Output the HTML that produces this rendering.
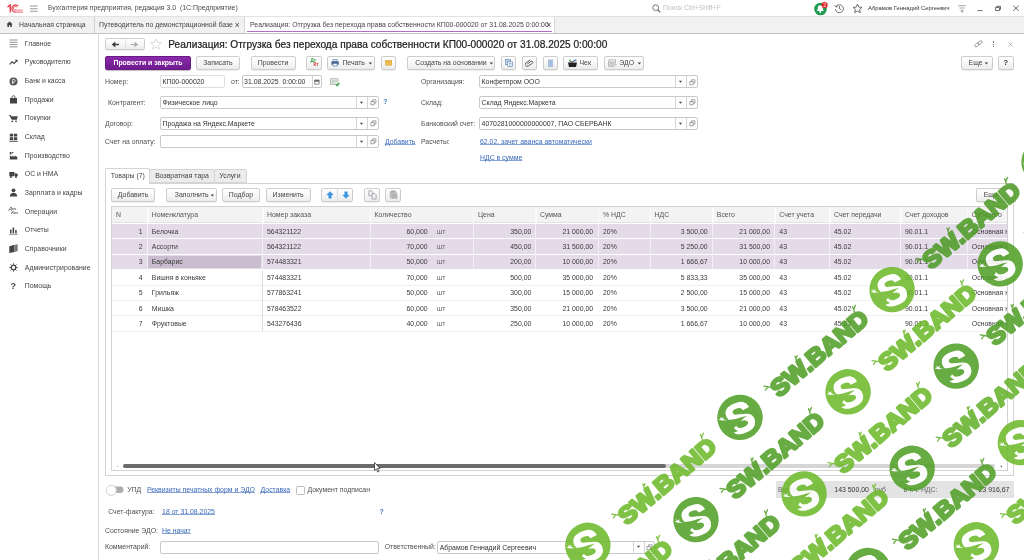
<!DOCTYPE html>
<html lang="ru">
<head>
<meta charset="utf-8">
<title>Реализация: Отгрузка без перехода права собственности</title>
<style>
*{box-sizing:border-box;margin:0;padding:0}
html,body{width:1024px;height:560px;overflow:hidden;background:#fff}
body{position:relative;font-family:"Liberation Sans",sans-serif;font-size:6.9px;color:#3c3c3c;line-height:1}
.a{position:absolute;white-space:nowrap}
.t{position:absolute;white-space:nowrap;height:10px;line-height:10px}
/* top bars */
#titlebar{left:0;top:0;width:1024px;height:16px;background:#fff}
#tabbar{left:0;top:16px;width:1024px;height:17.5px;background:#f1f1f1;border-top:1px solid #e2e2e2;border-bottom:1px solid #c4c4c4}
#acttab{left:244px;top:17px;width:310.5px;height:16px;background:#fff;border-left:1px solid #d6d6d6;border-right:1px solid #d6d6d6}
#actline{left:246.500px;top:30.600px;width:305.500px;height:1.400px;background:#b06fca}
/* sidebar */
#side{left:0;top:34px;width:99px;height:526px;background:#fff;border-right:1px solid #dcdcdc}
.sb{position:absolute;left:24.8px;height:10px;line-height:10px;color:#444;white-space:nowrap}
.ic{position:absolute;left:8.5px;width:9px;height:9px}
/* buttons */
.btn{position:absolute;height:13.5px;border:1px solid #cdcdcd;border-radius:2px;background:linear-gradient(#ffffff,#f6f6f6 55%,#ececec);box-shadow:0 0.5px 0.6px rgba(0,0,0,.13);text-align:center;line-height:11.5px;color:#444;white-space:nowrap}
.pbtn{position:absolute;height:13.5px;border:1px solid #6a1789;border-radius:2px;background:linear-gradient(#8a2aa9,#6f1b8f);box-shadow:0 0.6px 0.8px rgba(0,0,0,.25);text-align:center;line-height:11.5px;color:#fff;font-weight:bold;white-space:nowrap}
.inp{position:absolute;height:13px;border:1px solid #c9c9c9;border-radius:2px;background:#fff;line-height:11px;padding-left:1.3px;color:#333;white-space:nowrap;overflow:hidden}
.sep{position:absolute;top:0;width:1px;height:100%;background:#d4d4d4}
.lbl{position:absolute;height:10px;line-height:10px;color:#4f4f4f;white-space:nowrap}
.lnk{position:absolute;height:10px;line-height:10px;color:#3a6abb;text-decoration:underline;text-decoration-thickness:0.550px;text-underline-offset:0.100px;text-decoration-color:#86a4d6;text-decoration-skip-ink:none;white-space:nowrap}
.dd{position:absolute;width:0;height:0;border-left:1.800px solid transparent;border-right:1.800px solid transparent;border-top:2.200px solid #4a4a4a}
/* table */
.hc{position:absolute;top:207px;height:16px;line-height:16px;color:#555;white-space:nowrap}
.c{position:absolute;height:15.45px;line-height:15.45px;color:#3a3a3a;white-space:nowrap}
.r{text-align:right}
.vl{position:absolute;width:1px;background:#e3e3e3}
</style>
</head>
<body>
<div id="root" style="position:absolute;left:0;top:0;width:1024px;height:560px;will-change:transform;overflow:hidden">
<div class="a" id="titlebar"></div>
<div class="a" id="tabbar"></div>
<div class="a" id="acttab"></div>
<div class="a" id="actline"></div>
<svg class="a" style="left:6.5px;top:3.5px" width="17" height="9" viewBox="0 0 17 9"><g fill="none" stroke="#e3424a"><path d="M0.500 3.300L3.300 0.900V8.400" stroke-width="1.400"/><path d="M11.300 2.200A3.600 3.600 0 1 0 8.600 8.100" stroke-width="1.250"/><path d="M8.400 8.100H15.900" stroke-width="0.850"/><path d="M10.100 3.500A1.900 1.900 0 1 0 8.600 6.100" stroke-width="0.900"/><path d="M8.400 6.100H15.900" stroke-width="0.700"/></g></svg>
<svg class="a" style="left:30px;top:4.5px" width="8" height="7" viewBox="0 0 8 7"><path d="M0 1H7.600M0 3.800H7.600M0 6.300H7.600" stroke="#6a6a6a" stroke-width="0.700"/></svg>
<div class="t" style="top:3.30px;left:48.00px;color:#4a4a4a">Бухгалтерия предприятия, редакция 3.0&nbsp; (1С:Предприятие)</div>
<svg class="a" style="left:651.5px;top:3.5px" width="9" height="9" viewBox="0 0 9 9"><circle cx="3.7" cy="3.7" r="2.9" fill="none" stroke="#555" stroke-width="0.8"/><path d="M5.8 5.9L8.2 8.3" stroke="#555" stroke-width="1.1"/></svg>
<div class="t" style="top:3.20px;left:663.00px;color:#c2c2c2">Поиск Ctrl+Shift+F</div>
<svg class="a" style="left:813px;top:0.5px" width="16" height="15" viewBox="0 0 16 15"><circle cx="7.5" cy="8" r="6.3" fill="#1e9a52"/><path d="M7.3 4.2c-1.9 0-2.6 1.5-2.6 3.2 0 1.5-.8 2.1-1.2 2.6h7.6c-.4-.5-1.2-1.100-1.200-2.600 0-1.700-.700-3.200-2.600-3.200z" fill="#fff"/><circle cx="7.300" cy="10.900" r="1" fill="#fff"/><circle cx="11.600" cy="4" r="3.100" fill="#e0242b"/><text x="11.600" y="5.900" font-family="Liberation Sans,sans-serif" font-size="5.200" fill="#fff" text-anchor="middle">2</text></svg>
<svg class="a" style="left:833.5px;top:3px" width="11" height="11" viewBox="0 0 11 11"><path d="M2.3 3.2A4 4 0 1 1 1.4 6.2" fill="none" stroke="#4a4a4a" stroke-width="0.8"/><path d="M0.6 2.2L2.2 4.2L4 2.800" fill="none" stroke="#4a4a4a" stroke-width="0.8"/><path d="M5.400 3V5.600L7 6.700" fill="none" stroke="#4a4a4a" stroke-width="0.8"/></svg>
<svg class="a" style="left:851.5px;top:3px" width="11" height="11" viewBox="0 0 11 11"><path d="M5.500 1.100L6.800 4.100L10 4.400L7.600 6.500L8.300 9.700L5.500 8L2.700 9.700L3.400 6.500L1 4.400L4.200 4.100Z" fill="none" stroke="#4a4a4a" stroke-width="0.800" stroke-linejoin="round"/></svg>
<div class="t" style="top:3.20px;left:868.00px;font-size:5.85px;color:#333">Абрамов Геннадий Сергеевич</div>
<svg class="a" style="left:957.5px;top:4.5px" width="9" height="8" viewBox="0 0 9 8"><path d="M0.300 0.700H7.800M1.400 3H6.700M2.500 5.300H5.600" stroke="#666" stroke-width="0.600"/><path d="M3 6.500H5.100L4.050 7.700Z" fill="#444"/></svg>
<svg class="a" style="left:977px;top:4px" width="46" height="9" viewBox="0 0 46 9"><path d="M0.500 6.600H5.500" stroke="#444" stroke-width="0.800"/><path d="M18.600 3.400H22.400V6.600H18.600ZM19.800 3.400V2.300H23.500V5.400H22.400" fill="none" stroke="#444" stroke-width="0.800"/><path d="M36.200 1.700L41.800 6.800M41.800 1.700L36.200 6.800" stroke="#444" stroke-width="0.800"/></svg>
<svg class="a" style="left:5.6px;top:20.6px" width="7.2" height="6.6" viewBox="0 0 8 8"><path d="M0.200 4L4 0.500L7.800 4H6.700V7.500H4.800V5.200H3.200V7.500H1.300V4Z" fill="#444"/></svg>
<div class="t" style="top:19.70px;left:19.00px;color:#444">Начальная страница</div>
<div class="a" style="left:93.5px;top:17px;width:1px;height:16px;background:#d0d0d0"></div>
<div class="t" style="top:19.70px;left:99.00px;color:#444">Путеводитель по демонстрационной базе</div>
<div class="t" style="top:19.50px;left:234.80px;font-size:8.500px;color:#444">×</div>
<div class="t" style="top:19.70px;left:250.00px;color:#444">Реализация: Отгрузка без перехода права собственности КП00-000020 от 31.08.2025 0:00:00</div>
<div class="t" style="top:19.50px;left:546.30px;font-size:8.500px;color:#444">×</div>
<div class="a" id="side"></div>
<div class="sb" style="top:38.70px">Главное</div>
<svg class="ic" style="top:39.20px" viewBox="0 0 9 9"><path d="M0.500 1H8.500M0.500 3.300H8.500M0.500 5.600H8.500M0.500 7.900H8.500" stroke="#666" stroke-width="0.700"/></svg>
<div class="sb" style="top:57.36px">Руководителю</div>
<svg class="ic" style="top:57.86px" viewBox="0 0 9 9"><path d="M0.500 6.500L3 3.800L5 5.500L8 2.300" fill="none" stroke="#444" stroke-width="1.100"/><path d="M5.800 1.800H8.500V4.500Z" fill="#444"/></svg>
<div class="sb" style="top:76.02px">Банк и касса</div>
<svg class="ic" style="top:76.52px" viewBox="0 0 9 9"><circle cx="4.500" cy="4.500" r="4" fill="#555"/><path d="M3.600 6.800V2.500H5a1.200 1.200 0 0 1 0 2.500H2.900M2.900 5.900H5" fill="none" stroke="#fff" stroke-width="0.700"/></svg>
<div class="sb" style="top:94.68px">Продажи</div>
<svg class="ic" style="top:95.18px" viewBox="0 0 9 9"><path d="M1 3H8V8.500H1Z" fill="#444"/><path d="M3 3.500V2.200a1.500 1.500 0 0 1 3 0V3.500" fill="none" stroke="#444" stroke-width="0.800"/></svg>
<div class="sb" style="top:113.34px">Покупки</div>
<svg class="ic" style="top:113.84px" viewBox="0 0 9 9"><path d="M0 1H1.600L2.200 2.200H8.800L7.800 5.800H2.800Z" fill="#444"/><circle cx="3.300" cy="7.300" r="0.900" fill="#444"/><circle cx="7" cy="7.300" r="0.900" fill="#444"/></svg>
<div class="sb" style="top:132.00px">Склад</div>
<svg class="ic" style="top:132.50px" viewBox="0 0 9 9"><path d="M0.800 0.800H4.100V3.600H0.800ZM4.900 0.800H8.200V3.600H4.900ZM0.800 4.300H4.100V7.100H0.800ZM4.900 4.300H8.200V7.100H4.900ZM0.300 7.800H8.700V8.700H0.300Z" fill="#444"/></svg>
<div class="sb" style="top:150.66px">Производство</div>
<svg class="ic" style="top:151.16px" viewBox="0 0 9 9"><path d="M0.800 8.500V4.500L3.200 6V4.500L5.600 6V4.500L8.300 6V8.500ZM0.800 3.800V1H2.400V3.300Z" fill="#444"/><circle cx="3.600" cy="1.600" r="0.800" fill="#444"/></svg>
<div class="sb" style="top:169.32px">ОС и НМА</div>
<svg class="ic" style="top:169.82px" viewBox="0 0 9 9"><path d="M0.300 2H5.500V6.300H0.300ZM5.900 3.200H7.600L8.800 4.700V6.300H5.900Z" fill="#444"/><circle cx="2" cy="6.900" r="1" fill="#444"/><circle cx="7" cy="6.900" r="1" fill="#444"/></svg>
<div class="sb" style="top:187.98px">Зарплата и кадры</div>
<svg class="ic" style="top:188.48px" viewBox="0 0 9 9"><circle cx="4.500" cy="2.300" r="1.900" fill="#444"/><path d="M0.800 8.500C0.800 6 2.500 4.800 4.500 4.800S8.200 6 8.200 8.500Z" fill="#444"/></svg>
<div class="sb" style="top:206.64px">Операции</div>
<div class="a" style="left:8.800px;top:207.04px;font-size:4.400px;font-weight:bold;font-style:italic;color:#5a5a5a;line-height:4.400px">Дт<br>&nbsp;&nbsp;Кт</div>
<div class="sb" style="top:225.30px">Отчеты</div>
<svg class="ic" style="top:225.80px" viewBox="0 0 9 9"><path d="M1 3.500H2.500V7.500H1ZM3.600 1.500H5.100V7.500H3.600ZM6.200 4H7.700V7.500H6.200ZM0.300 7.900H8.700V8.600H0.300Z" fill="#444"/></svg>
<div class="sb" style="top:243.96px">Справочники</div>
<svg class="ic" style="top:244.46px" viewBox="0 0 9 9"><path d="M0.300 2.200L5.600 0.800V8L0.300 9Z" fill="#444"/><path d="M6 0.800L8.700 0.200V7L6 8Z" fill="#7a7a7a"/></svg>
<div class="sb" style="top:262.62px">Администрирование</div>
<svg class="ic" style="top:263.12px" viewBox="0 0 9 9"><circle cx="4.500" cy="4.500" r="2.300" fill="none" stroke="#444" stroke-width="1.300"/><path d="M4.500 0.300V8.700M0.300 4.500H8.700M1.500 1.500L7.500 7.500M7.500 1.500L1.500 7.500" stroke="#444" stroke-width="1" stroke-dasharray="1.400 5.600"/></svg>
<div class="sb" style="top:281.28px">Помощь</div>
<div class="a" style="left:10.500px;top:281.28px;font-size:9px;line-height:10px;color:#444;font-weight:bold">?</div>
<div class="btn" style="left:105px;top:38.300px;width:39.500px;height:12.200px"></div>
<div class="a" style="left:124.500px;top:39.300px;width:1px;height:10.200px;background:#e4e4e4"></div>
<svg class="a" style="left:110px;top:40px" width="30" height="9" viewBox="0 0 30 9"><path d="M1.700 4.500L5.300 1.500V3.800H8.900V5.200H5.300V7.500Z" fill="#3f3f3f"/><path d="M28.100 4.500L24.600 1.700V4H20.800V5H24.600V7.300Z" fill="#a8a8a8"/></svg>
<svg class="a" style="left:150.400px;top:38.100px" width="12" height="12" viewBox="0 0 12 12"><path d="M6 0.800L7.500 4.400L11.300 4.700L8.400 7.200L9.300 11L6 9L2.700 11L3.600 7.200L0.700 4.700L4.500 4.400Z" fill="none" stroke="#cfcfcf" stroke-width="0.700" stroke-linejoin="round"/></svg>
<div class="a" style="left:168.300px;top:37.500px;height:14px;line-height:14px;font-size:10.150px;color:#1c1c1c;-webkit-text-stroke:0.220px #1c1c1c">Реализация: Отгрузка без перехода права собственности КП00-000020 от 31.08.2025 0:00:00</div>
<svg class="a" style="left:973.500px;top:40px" width="9" height="8" viewBox="0 0 9 8"><g fill="none" stroke="#8a8a8a" stroke-width="0.800"><rect x="0.600" y="3.600" width="4.600" height="2.600" rx="1.300" transform="rotate(-38 2.900 4.900)"/><rect x="3.800" y="1.400" width="4.600" height="2.600" rx="1.300" transform="rotate(-38 6.100 2.700)"/></g></svg>
<div class="a" style="left:993.300px;top:41.300px;width:1px;height:5.600px;border-left:1px dotted #777"></div>
<svg class="a" style="left:1007.500px;top:41.800px" width="5" height="5" viewBox="0 0 5 5"><path d="M0.500 0.500L4.500 4.500M4.500 0.500L0.500 4.500" stroke="#999" stroke-width="0.700"/></svg>
<div class="pbtn" style="left:105px;top:56.2px;width:86.00px;">Провести и закрыть</div>
<div class="btn" style="left:196px;top:56.2px;width:43.80px;">Записать</div>
<div class="btn" style="left:250.5px;top:56.2px;width:45.00px;">Провести</div>
<div class="btn" style="left:306.2px;top:56.2px;width:15.60px;"><span style="position:absolute;left:3.200px;top:1.600px;font-size:4.600px;line-height:4.400px;font-weight:bold;color:#2a9a3a;text-align:left">Дт<br><span style="color:#d33;padding-left:3px">Кт</span></span></div>
<div class="btn" style="left:327.4px;top:56.2px;width:47.80px;text-align:left;padding-left:7px"><span style="padding-left:7px">Печать</span></div>
<svg class="a" style="left:331px;top:59px" width="8.200" height="7.600" viewBox="0 0 9 8"><path d="M2.200 0.500H6.800V2.500H2.200Z" fill="#fff" stroke="#456a96" stroke-width="0.700"/><path d="M0.500 2.500H8.500V6H0.500Z" fill="#3e5f8a"/><path d="M2.200 4.600H6.800V7.500H2.200Z" fill="#fff" stroke="#456a96" stroke-width="0.700"/></svg>
<svg class="a" style="left:368.20px;top:62.300px" width="5" height="4" viewBox="0 0 5 4"><path d="M0.700 0.500H4.100L2.400 2.500Z" fill="#444"/></svg>
<div class="btn" style="left:380.5px;top:56.2px;width:15.80px;"></div>
<svg class="a" style="left:384.600px;top:60px" width="7.600" height="5.900" viewBox="0 0 9 7"><rect x="0.400" y="0.400" width="8" height="5.800" rx="0.600" fill="#f3c44f" stroke="#c9952a" stroke-width="0.600"/><path d="M0.800 0.900L4.400 3.600L8 0.900" fill="none" stroke="#c9952a" stroke-width="0.600"/></svg>
<div class="btn" style="left:407.4px;top:56.2px;width:88.10px;text-align:left;padding-left:6.800px">Создать на основании</div>
<svg class="a" style="left:489.00px;top:62.300px" width="5" height="4" viewBox="0 0 5 4"><path d="M0.700 0.500H4.100L2.400 2.500Z" fill="#444"/></svg>
<div class="btn" style="left:501.2px;top:56.2px;width:15.20px;"></div>
<svg class="a" style="left:504.800px;top:58.800px" width="8" height="8" viewBox="0 0 8 8"><rect x="0.500" y="0.500" width="5" height="5" fill="#dbe8f5" stroke="#4a78b0" stroke-width="0.600"/><rect x="2.800" y="2.800" width="4.700" height="4.700" fill="#fff" stroke="#4a78b0" stroke-width="0.600"/><path d="M1.500 2H4.500M1.500 3.500H2.600M4 4.500H6.500M4 6H6.500" stroke="#4a78b0" stroke-width="0.600"/></svg>
<div class="btn" style="left:521.8px;top:56.2px;width:15.70px;"></div>
<svg class="a" style="left:525.400px;top:59px" width="9" height="8" viewBox="0 0 9 8"><path d="M2.400 5.400L5.600 2.200a1.200 1.200 0 0 1 1.800 1.700L3.600 7.100a1.900 1.900 0 0 1-2.700-2.700L4.800 0.900" fill="none" stroke="#555" stroke-width="0.900" transform="rotate(8 4.500 4)"/></svg>
<div class="btn" style="left:542.5px;top:56.2px;width:15.50px;"></div>
<svg class="a" style="left:547.600px;top:58.800px" width="5.600" height="8.400" viewBox="0 0 7 9"><rect x="0.700" y="0.500" width="5.600" height="8" fill="#c9dcf0" stroke="#5c85b8" stroke-width="0.600"/><path d="M1.800 2.200H5.200M1.800 3.700H5.200M1.800 5.200H5.200M1.800 6.700H5.200" stroke="#5c85b8" stroke-width="0.600"/></svg>
<div class="btn" style="left:563.3px;top:56.2px;width:35.00px;text-align:left;padding-left:15.200px">Чек</div>
<svg class="a" style="left:567px;top:58.500px" width="11" height="9" viewBox="0 0 11 9"><path d="M1 3.500H10L9 8H2Z" fill="#222"/><path d="M2.500 1.500L5 3.300L8.500 1" fill="none" stroke="#222" stroke-width="0.900"/><rect x="7.500" y="0.600" width="2" height="1.600" fill="#3a8ad8"/><rect x="2" y="0.800" width="1.600" height="1.400" fill="#3aa84a"/></svg>
<div class="btn" style="left:603.8px;top:56.2px;width:40.00px;text-align:left;padding-left:14.500px">ЭДО</div>
<svg class="a" style="left:607.800px;top:58.800px" width="9" height="8" viewBox="0 0 9 8"><path d="M1 0.800H7.500V4.500M1 0.800V3M0.500 3H6V7.200H0.500ZM1.800 4.400H4.800M1.800 5.800H4.800M7 5.500H8.500" fill="none" stroke="#888" stroke-width="0.600"/></svg>
<svg class="a" style="left:637.20px;top:62.300px" width="5" height="4" viewBox="0 0 5 4"><path d="M0.700 0.500H4.100L2.400 2.500Z" fill="#444"/></svg>
<div class="btn" style="left:960.6px;top:56.2px;width:32.00px;text-align:left;padding-left:7px">Еще</div>
<svg class="a" style="left:984.40px;top:62.300px" width="5" height="4" viewBox="0 0 5 4"><path d="M0.700 0.500H4.100L2.400 2.500Z" fill="#444"/></svg>
<div class="btn" style="left:998.2px;top:56.2px;width:15.40px;font-weight:bold;font-size:7.500px;color:#333">?</div>
<div class="lbl" style="top:76.90px;left:105.00px;">Номер:</div>
<div class="inp" style="border-color:#dedede;left:160.2px;top:75.4px;width:64.60px;height:13px">КП00-000020</div>
<div class="lbl" style="top:76.90px;left:231.00px;">от:</div>
<div class="inp" style="left:241.8px;top:75.4px;width:80.20px;height:13px">31.08.2025&nbsp; 0:00:00<div class="sep" style="left:69.00px"></div></div>
<svg class="a" style="left:314.200px;top:79px" width="5.800" height="5.800" viewBox="0 0 7 7"><path d="M0.800 1.500H6.200V6.200H0.800Z" fill="#fff" stroke="#555" stroke-width="0.800"/><path d="M0.800 1.500H6.200V3.200H0.800Z" fill="#555"/><path d="M2 0.500V1.800M5 0.500V1.800" stroke="#555" stroke-width="0.800"/></svg>
<svg class="a" style="left:329.500px;top:78px" width="10" height="9" viewBox="0 0 10 9"><rect x="0.500" y="0.800" width="7.500" height="5.500" fill="#eef3ea" stroke="#8a9a8a" stroke-width="0.600"/><path d="M1.500 2.300H7M1.500 3.600H7M1.500 4.900H5" stroke="#9aa" stroke-width="0.500"/><path d="M5.800 6L7.300 7.800L9.500 4.800" fill="none" stroke="#2c9a3c" stroke-width="1.100"/></svg>
<div class="lbl" style="top:97.60px;left:108.00px;">Контрагент:</div>
<div class="inp" style="left:160.2px;top:96.3px;width:218.60px;height:13px">Физическое лицо<div class="sep" style="left:195.00px"></div><div class="sep" style="left:205.70px"></div></div>
<svg class="a" style="left:359.30px;top:101.20px" width="5" height="4" viewBox="0 0 5 4"><path d="M0.900 0.800H4.100L2.500 2.800Z" fill="#3c3c3c"/></svg>
<svg class="a" style="left:369.80px;top:99.40px" width="7" height="7" viewBox="0 0 7 7"><path d="M2.600 0.800H5.900V4.100H2.600Z" fill="#fff" stroke="#7d7d7d" stroke-width="0.700"/><path d="M0.900 2.500H4.200V5.800H0.900Z" fill="#fff" stroke="#7d7d7d" stroke-width="0.700"/></svg>
<div class="t" style="top:97.40px;left:383.30px;color:#4278bd;font-weight:bold;font-size:7px">?</div>
<div class="lbl" style="top:118.60px;left:105.00px;">Договор:</div>
<div class="inp" style="left:160.2px;top:117.1px;width:218.60px;height:13px">Продажа на Яндекс.Маркете<div class="sep" style="left:195.00px"></div><div class="sep" style="left:205.70px"></div></div>
<svg class="a" style="left:359.30px;top:122.00px" width="5" height="4" viewBox="0 0 5 4"><path d="M0.900 0.800H4.100L2.500 2.800Z" fill="#3c3c3c"/></svg>
<svg class="a" style="left:369.80px;top:120.20px" width="7" height="7" viewBox="0 0 7 7"><path d="M2.600 0.800H5.900V4.100H2.600Z" fill="#fff" stroke="#7d7d7d" stroke-width="0.700"/><path d="M0.900 2.500H4.200V5.800H0.900Z" fill="#fff" stroke="#7d7d7d" stroke-width="0.700"/></svg>
<div class="lbl" style="top:136.60px;left:105.00px;">Счет на оплату:</div>
<div class="inp" style="left:160.2px;top:135.1px;width:218.60px;height:13px"><div class="sep" style="left:195.00px"></div><div class="sep" style="left:205.70px"></div></div>
<svg class="a" style="left:359.30px;top:140.00px" width="5" height="4" viewBox="0 0 5 4"><path d="M0.900 0.800H4.100L2.500 2.800Z" fill="#3c3c3c"/></svg>
<svg class="a" style="left:369.80px;top:138.20px" width="7" height="7" viewBox="0 0 7 7"><path d="M2.600 0.800H5.900V4.100H2.600Z" fill="#fff" stroke="#7d7d7d" stroke-width="0.700"/><path d="M0.900 2.500H4.200V5.800H0.900Z" fill="#fff" stroke="#7d7d7d" stroke-width="0.700"/></svg>
<div class="lnk" style="top:136.60px;left:385.00px;">Добавить</div>
<div class="lbl" style="top:76.90px;left:421.00px;">Организация:</div>
<div class="inp" style="left:479.3px;top:75.4px;width:218.30px;height:13px">Конфетпром ООО<div class="sep" style="left:194.70px"></div><div class="sep" style="left:205.60px"></div></div>
<svg class="a" style="left:678.10px;top:80.30px" width="5" height="4" viewBox="0 0 5 4"><path d="M0.900 0.800H4.100L2.500 2.800Z" fill="#3c3c3c"/></svg>
<svg class="a" style="left:688.60px;top:78.50px" width="7" height="7" viewBox="0 0 7 7"><path d="M2.600 0.800H5.900V4.100H2.600Z" fill="#fff" stroke="#7d7d7d" stroke-width="0.700"/><path d="M0.900 2.500H4.200V5.800H0.900Z" fill="#fff" stroke="#7d7d7d" stroke-width="0.700"/></svg>
<div class="lbl" style="top:97.60px;left:421.00px;">Склад:</div>
<div class="inp" style="left:479.3px;top:96.3px;width:218.30px;height:13px">Склад Яндекс.Маркета<div class="sep" style="left:194.70px"></div><div class="sep" style="left:205.60px"></div></div>
<svg class="a" style="left:678.10px;top:101.20px" width="5" height="4" viewBox="0 0 5 4"><path d="M0.900 0.800H4.100L2.500 2.800Z" fill="#3c3c3c"/></svg>
<svg class="a" style="left:688.60px;top:99.40px" width="7" height="7" viewBox="0 0 7 7"><path d="M2.600 0.800H5.900V4.100H2.600Z" fill="#fff" stroke="#7d7d7d" stroke-width="0.700"/><path d="M0.900 2.500H4.200V5.800H0.900Z" fill="#fff" stroke="#7d7d7d" stroke-width="0.700"/></svg>
<div class="lbl" style="top:118.60px;left:421.00px;">Банковский счет:</div>
<div class="inp" style="left:479.3px;top:117.1px;width:218.30px;height:13px">4070281000000000007, ПАО СБЕРБАНК<div class="sep" style="left:194.70px"></div><div class="sep" style="left:205.60px"></div></div>
<svg class="a" style="left:678.10px;top:122.00px" width="5" height="4" viewBox="0 0 5 4"><path d="M0.900 0.800H4.100L2.500 2.800Z" fill="#3c3c3c"/></svg>
<svg class="a" style="left:688.60px;top:120.20px" width="7" height="7" viewBox="0 0 7 7"><path d="M2.600 0.800H5.900V4.100H2.600Z" fill="#fff" stroke="#7d7d7d" stroke-width="0.700"/><path d="M0.900 2.500H4.200V5.800H0.900Z" fill="#fff" stroke="#7d7d7d" stroke-width="0.700"/></svg>
<div class="lbl" style="top:136.60px;left:421.00px;">Расчеты:</div>
<div class="lnk" style="top:136.60px;left:480.00px;">62.02, зачет аванса автоматически</div>
<div class="lnk" style="top:153.30px;left:480.00px;">НДС в сумме</div>
<div class="a" style="left:105px;top:183px;width:909px;height:292.800px;border:1px solid #d4d4d4;background:#fff"></div>
<div class="a" style="left:149px;top:168.600px;width:65.500px;height:14.900px;background:#ececec;border:1px solid #d4d4d4;border-radius:2px 2px 0 0"></div>
<div class="a" style="left:213.500px;top:168.600px;width:33px;height:14.900px;background:#ececec;border:1px solid #d4d4d4;border-radius:2px 2px 0 0"></div>
<div class="a" style="left:105px;top:168.300px;width:44.800px;height:15.900px;background:#fff;border:1px solid #d4d4d4;border-bottom:none;border-radius:2px 2px 0 0"></div>
<div class="t" style="top:171.30px;left:110.80px;color:#444">Товары (7)</div>
<div class="t" style="top:171.30px;left:155.20px;color:#444">Возвратная тара</div>
<div class="t" style="top:171.30px;left:219.30px;color:#444">Услуги</div>
<div class="btn" style="left:111.2px;top:188px;width:43.80px;">Добавить</div>
<div class="btn" style="left:166.3px;top:188px;width:50.50px;text-align:left;padding-left:7.500px">Заполнить</div>
<svg class="a" style="left:209.70px;top:194.1px" width="5" height="4" viewBox="0 0 5 4"><path d="M0.700 0.500H4.100L2.400 2.500Z" fill="#444"/></svg>
<div class="btn" style="left:222px;top:188px;width:38.00px;">Подбор</div>
<div class="btn" style="left:265.5px;top:188px;width:45.30px;">Изменить</div>
<div class="btn" style="left:321.2px;top:188px;width:32.20px;"></div>
<div class="a" style="left:337px;top:189px;width:1px;height:11.500px;background:#dedede"></div>
<svg class="a" style="left:325.500px;top:191px" width="24" height="8" viewBox="0 0 24 8"><path d="M4 0.500L7.300 4H5.300V7.300H2.700V4H0.700Z" fill="#3897e6" stroke="#2a7fd0" stroke-width="0.300"/><path d="M20 7.500L23.300 4H21.300V0.700H18.700V4H16.700Z" fill="#3897e6" stroke="#2a7fd0" stroke-width="0.300"/></svg>
<div class="btn" style="left:364px;top:188px;width:16.20px;"></div>
<svg class="a" style="left:367.600px;top:189.5px" width="10" height="10" viewBox="0 0 10 10"><path d="M0.800 0.700H3.500L4.800 2V5.700H0.800Z" fill="#f4f4f4" stroke="#8e9196" stroke-width="0.700"/><path d="M4 3.600H6.900L8.200 4.900V9H4Z" fill="#eef0f4" stroke="#8e9196" stroke-width="0.700"/></svg>
<div class="btn" style="left:385.1px;top:188px;width:16.00px;"></div>
<svg class="a" style="left:388.600px;top:189.8px" width="9" height="9" viewBox="0 0 9 9"><path d="M0.700 1.300H7.700V8.300H0.700Z" fill="#bcbcbc"/><path d="M2.200 0.400H6.200V2.200H2.200Z" fill="#a9a9a9"/><path d="M2.500 3.500H8.300V8.800H2.500Z" fill="#b3b3b3" stroke="#c9c9c9" stroke-width="0.400"/></svg>
<div class="btn" style="left:975.7px;top:188px;width:40.30px;text-align:left;padding-left:7px;border-right:none;border-radius:2px 0 0 2px">Еще</div>
<div class="a" style="left:111px;top:206px;width:897px;height:264.500px;border:1px solid #d2d2d2;background:#fff"></div>
<div class="a" style="left:112px;top:207px;width:895px;height:16.300px;background:#f3f3f3;border-bottom:1px solid #e2e2e2"></div>
<div class="a" style="left:112px;top:223.80px;width:895px;height:14.50px;background:#e4dbe8"></div>
<div class="a" style="left:112px;top:239.30px;width:895px;height:14.40px;background:#e4dbe8"></div>
<div class="a" style="left:112px;top:254.70px;width:895px;height:14.30px;background:#e4dbe8"></div>
<div class="a" style="left:148.300px;top:255.80px;width:112.500px;height:12.200px;background:#c9bdcf"></div>
<div class="a" style="left:112px;top:284.50px;width:895px;height:1px;background:#f0f0f0"></div>
<div class="a" style="left:112px;top:300.00px;width:895px;height:1px;background:#f0f0f0"></div>
<div class="a" style="left:112px;top:315.40px;width:895px;height:1px;background:#f0f0f0"></div>
<div class="a" style="left:112px;top:330.80px;width:895px;height:1px;background:#f0f0f0"></div>
<div class="vl" style="left:147.00px;top:207px;height:16.300px;width:1.500px;background:#fbfbfb"></div>
<div class="vl" style="left:147.00px;top:223.30px;height:46.20px;background:#f4eff6"></div>
<div class="vl" style="left:262.00px;top:207px;height:16.300px;width:1.500px;background:#fbfbfb"></div>
<div class="vl" style="left:262.00px;top:269.50px;height:61.80px;background:#dcdcdc"></div>
<div class="vl" style="left:262.00px;top:223.30px;height:46.20px;background:#f4eff6"></div>
<div class="vl" style="left:369.50px;top:207px;height:16.300px;width:1.500px;background:#fbfbfb"></div>
<div class="vl" style="left:369.50px;top:223.30px;height:46.20px;background:#f4eff6"></div>
<div class="vl" style="left:472.80px;top:207px;height:16.300px;width:1.500px;background:#fbfbfb"></div>
<div class="vl" style="left:472.80px;top:223.30px;height:46.20px;background:#f4eff6"></div>
<div class="vl" style="left:535.30px;top:207px;height:16.300px;width:1.500px;background:#fbfbfb"></div>
<div class="vl" style="left:535.30px;top:223.30px;height:46.20px;background:#f4eff6"></div>
<div class="vl" style="left:597.80px;top:207px;height:16.300px;width:1.500px;background:#fbfbfb"></div>
<div class="vl" style="left:597.80px;top:223.30px;height:46.20px;background:#f4eff6"></div>
<div class="vl" style="left:649.50px;top:207px;height:16.300px;width:1.500px;background:#fbfbfb"></div>
<div class="vl" style="left:649.50px;top:223.30px;height:46.20px;background:#f4eff6"></div>
<div class="vl" style="left:712.00px;top:207px;height:16.300px;width:1.500px;background:#fbfbfb"></div>
<div class="vl" style="left:712.00px;top:223.30px;height:46.20px;background:#f4eff6"></div>
<div class="vl" style="left:774.00px;top:207px;height:16.300px;width:1.500px;background:#fbfbfb"></div>
<div class="vl" style="left:774.00px;top:223.30px;height:46.20px;background:#f4eff6"></div>
<div class="vl" style="left:829.00px;top:207px;height:16.300px;width:1.500px;background:#fbfbfb"></div>
<div class="vl" style="left:829.00px;top:223.30px;height:46.20px;background:#f4eff6"></div>
<div class="vl" style="left:900.10px;top:207px;height:16.300px;width:1.500px;background:#fbfbfb"></div>
<div class="vl" style="left:900.10px;top:223.30px;height:46.20px;background:#f4eff6"></div>
<div class="vl" style="left:966.90px;top:207px;height:16.300px;width:1.500px;background:#fbfbfb"></div>
<div class="vl" style="left:966.90px;top:223.30px;height:46.20px;background:#f4eff6"></div>
<div class="hc" style="left:116px">N</div>
<div class="hc" style="left:151.8px">Номенклатура</div>
<div class="hc" style="left:267px">Номер заказа</div>
<div class="hc" style="left:374.5px">Количество</div>
<div class="hc" style="left:478px">Цена</div>
<div class="hc" style="left:540px">Сумма</div>
<div class="hc" style="left:603px">% НДС</div>
<div class="hc" style="left:654.5px">НДС</div>
<div class="hc" style="left:716.8px">Всего</div>
<div class="hc" style="left:779.3px">Счет учета</div>
<div class="hc" style="left:834px">Счет передачи</div>
<div class="hc" style="left:905px">Счет доходов</div>
<div class="hc" style="left:971.8px">Субконто</div>
<div class="c r" style="right:881.40px;top:224.10px;">1</div>
<div class="c" style="left:151.8px;top:224.10px;">Белочка</div>
<div class="c" style="left:267px;top:224.10px;">564321122</div>
<div class="c r" style="right:596.40px;top:224.10px;">60,000</div>
<div class="c" style="left:436.8px;top:224.10px;color:#666">шт</div>
<div class="c r" style="right:492.70px;top:224.10px;">350,00</div>
<div class="c r" style="right:430.90px;top:224.10px;">21 000,00</div>
<div class="c" style="left:603px;top:224.10px;">20%</div>
<div class="c r" style="right:316.40px;top:224.10px;">3 500,00</div>
<div class="c r" style="right:254.00px;top:224.10px;">21 000,00</div>
<div class="c" style="left:779.3px;top:224.10px;">43</div>
<div class="c" style="left:834px;top:224.10px;">45.02</div>
<div class="c" style="left:905px;top:224.10px;">90.01.1</div>
<div class="c" style="left:971.800px;top:224.10px;width:35px;overflow:hidden">Основная номенклатурная группа</div>
<div class="c r" style="right:881.40px;top:238.90px;">2</div>
<div class="c" style="left:151.8px;top:238.90px;">Ассорти</div>
<div class="c" style="left:267px;top:238.90px;">564321122</div>
<div class="c r" style="right:596.40px;top:238.90px;">70,000</div>
<div class="c" style="left:436.8px;top:238.90px;color:#666">шт</div>
<div class="c r" style="right:492.70px;top:238.90px;">450,00</div>
<div class="c r" style="right:430.90px;top:238.90px;">31 500,00</div>
<div class="c" style="left:603px;top:238.90px;">20%</div>
<div class="c r" style="right:316.40px;top:238.90px;">5 250,00</div>
<div class="c r" style="right:254.00px;top:238.90px;">31 500,00</div>
<div class="c" style="left:779.3px;top:238.90px;">43</div>
<div class="c" style="left:834px;top:238.90px;">45.02</div>
<div class="c" style="left:905px;top:238.90px;">90.01.1</div>
<div class="c" style="left:971.800px;top:238.90px;width:35px;overflow:hidden">Основная номенклатурная группа</div>
<div class="c r" style="right:881.40px;top:254.30px;">3</div>
<div class="c" style="left:151.8px;top:254.30px;">Барбарис</div>
<div class="c" style="left:267px;top:254.30px;">574483321</div>
<div class="c r" style="right:596.40px;top:254.30px;">50,000</div>
<div class="c" style="left:436.8px;top:254.30px;color:#666">шт</div>
<div class="c r" style="right:492.70px;top:254.30px;">200,00</div>
<div class="c r" style="right:430.90px;top:254.30px;">10 000,00</div>
<div class="c" style="left:603px;top:254.30px;">20%</div>
<div class="c r" style="right:316.40px;top:254.30px;">1 666,67</div>
<div class="c r" style="right:254.00px;top:254.30px;">10 000,00</div>
<div class="c" style="left:779.3px;top:254.30px;">43</div>
<div class="c" style="left:834px;top:254.30px;">45.02</div>
<div class="c" style="left:905px;top:254.30px;">90.01.1</div>
<div class="c" style="left:971.800px;top:254.30px;width:35px;overflow:hidden">Основная номенклатурная группа</div>
<div class="c r" style="right:881.40px;top:269.60px;">4</div>
<div class="c" style="left:151.8px;top:269.60px;">Вишня в коньяке</div>
<div class="c" style="left:267px;top:269.60px;">574483321</div>
<div class="c r" style="right:596.40px;top:269.60px;">70,000</div>
<div class="c" style="left:436.8px;top:269.60px;color:#666">шт</div>
<div class="c r" style="right:492.70px;top:269.60px;">500,00</div>
<div class="c r" style="right:430.90px;top:269.60px;">35 000,00</div>
<div class="c" style="left:603px;top:269.60px;">20%</div>
<div class="c r" style="right:316.40px;top:269.60px;">5 833,33</div>
<div class="c r" style="right:254.00px;top:269.60px;">35 000,00</div>
<div class="c" style="left:779.3px;top:269.60px;">43</div>
<div class="c" style="left:834px;top:269.60px;">45.02</div>
<div class="c" style="left:905px;top:269.60px;">90.01.1</div>
<div class="c" style="left:971.800px;top:269.60px;width:35px;overflow:hidden">Основная номенклатурная группа</div>
<div class="c r" style="right:881.40px;top:285.10px;">5</div>
<div class="c" style="left:151.8px;top:285.10px;">Грильяж</div>
<div class="c" style="left:267px;top:285.10px;">577863241</div>
<div class="c r" style="right:596.40px;top:285.10px;">50,000</div>
<div class="c" style="left:436.8px;top:285.10px;color:#666">шт</div>
<div class="c r" style="right:492.70px;top:285.10px;">300,00</div>
<div class="c r" style="right:430.90px;top:285.10px;">15 000,00</div>
<div class="c" style="left:603px;top:285.10px;">20%</div>
<div class="c r" style="right:316.40px;top:285.10px;">2 500,00</div>
<div class="c r" style="right:254.00px;top:285.10px;">15 000,00</div>
<div class="c" style="left:779.3px;top:285.10px;">43</div>
<div class="c" style="left:834px;top:285.10px;">45.02</div>
<div class="c" style="left:905px;top:285.10px;">90.01.1</div>
<div class="c" style="left:971.800px;top:285.10px;width:35px;overflow:hidden">Основная номенклатурная группа</div>
<div class="c r" style="right:881.40px;top:300.60px;">6</div>
<div class="c" style="left:151.8px;top:300.60px;">Мишка</div>
<div class="c" style="left:267px;top:300.60px;">578463522</div>
<div class="c r" style="right:596.40px;top:300.60px;">60,000</div>
<div class="c" style="left:436.8px;top:300.60px;color:#666">шт</div>
<div class="c r" style="right:492.70px;top:300.60px;">350,00</div>
<div class="c r" style="right:430.90px;top:300.60px;">21 000,00</div>
<div class="c" style="left:603px;top:300.60px;">20%</div>
<div class="c r" style="right:316.40px;top:300.60px;">3 500,00</div>
<div class="c r" style="right:254.00px;top:300.60px;">21 000,00</div>
<div class="c" style="left:779.3px;top:300.60px;">43</div>
<div class="c" style="left:834px;top:300.60px;">45.02</div>
<div class="c" style="left:905px;top:300.60px;">90.01.1</div>
<div class="c" style="left:971.800px;top:300.60px;width:35px;overflow:hidden">Основная номенклатурная группа</div>
<div class="c r" style="right:881.40px;top:316.00px;">7</div>
<div class="c" style="left:151.8px;top:316.00px;">Фруктовые</div>
<div class="c" style="left:267px;top:316.00px;">543276436</div>
<div class="c r" style="right:596.40px;top:316.00px;">40,000</div>
<div class="c" style="left:436.8px;top:316.00px;color:#666">шт</div>
<div class="c r" style="right:492.70px;top:316.00px;">250,00</div>
<div class="c r" style="right:430.90px;top:316.00px;">10 000,00</div>
<div class="c" style="left:603px;top:316.00px;">20%</div>
<div class="c r" style="right:316.40px;top:316.00px;">1 666,67</div>
<div class="c r" style="right:254.00px;top:316.00px;">10 000,00</div>
<div class="c" style="left:779.3px;top:316.00px;">43</div>
<div class="c" style="left:834px;top:316.00px;">45.02</div>
<div class="c" style="left:905px;top:316.00px;">90.01.1</div>
<div class="c" style="left:971.800px;top:316.00px;width:35px;overflow:hidden">Основная номенклатурная группа</div>
<div class="a" style="left:123.300px;top:464.200px;width:872px;height:3.800px;border-radius:2px;background:#d6d6d6"></div>
<div class="a" style="left:123.300px;top:464.200px;width:543px;height:3.800px;border-radius:2px;background:#6b6b6b"></div>
<svg class="a" style="left:116px;top:464.500px" width="3" height="3" viewBox="0 0 3 3"><path d="M2.200 0.300L0.600 1.500L2.200 2.700Z" fill="#ccc"/></svg>
<svg class="a" style="left:1000px;top:464.500px" width="3" height="3" viewBox="0 0 3 3"><path d="M0.800 0.300L2.400 1.500L0.800 2.700Z" fill="#555"/></svg>
<div class="a" style="left:775.500px;top:480.800px;width:238.500px;height:17.600px;background:#e3e3e3"></div>
<div class="lbl" style="top:484.70px;left:778.00px;color:#666">Всего:</div>
<div class="t" style="top:484.70px;right:155.20px;color:#333">143 500,00</div>
<div class="lbl" style="top:484.70px;left:874.70px;color:#666">руб</div>
<div class="lbl" style="top:484.70px;left:903.60px;color:#666">в т.ч. НДС:</div>
<div class="t" style="top:484.70px;right:14.70px;color:#333">23 916,67</div>
<svg class="a" style="left:107px;top:485px" width="18" height="10" viewBox="0 0 18 10"><rect x="1" y="1.600" width="15.500" height="6.400" rx="3.200" fill="#adadad"/></svg>
<svg class="a" style="left:104.500px;top:483.500px" width="13" height="13" viewBox="0 0 13 13"><circle cx="6.300" cy="6.300" r="5.100" fill="#fff" stroke="#c4c4c4" stroke-width="0.800"/></svg>
<div class="lbl" style="top:485.20px;left:127.20px;">УПД</div>
<div class="lnk" style="top:485.20px;left:146.90px;">Реквизиты печатных форм и ЭДО</div>
<div class="lnk" style="top:485.20px;left:260.60px;">Доставка</div>
<div class="a" style="left:296.200px;top:485.800px;width:8.800px;height:8.800px;border:1px solid #bdbdbd;border-radius:1.500px;background:#fff"></div>
<div class="lbl" style="top:485.20px;left:307.40px;">Документ подписан</div>
<div class="lbl" style="top:507.00px;left:108.20px;">Счет-фактура:</div>
<div class="lnk" style="top:507.00px;left:162.10px;">18 от 31.08.2025</div>
<div class="t" style="top:507.00px;left:379.50px;color:#4278bd;font-weight:bold;font-size:7px">?</div>
<div class="lbl" style="top:525.70px;left:105.00px;">Состояние ЭДО:</div>
<div class="lnk" style="top:525.70px;left:162.00px;">Не начат</div>
<div class="lbl" style="top:542.40px;left:105.00px;">Комментарий:</div>
<div class="inp" style="left:160.2px;top:540.5px;width:218.80px;height:13px"></div>
<div class="lbl" style="top:542.40px;left:384.70px;">Ответственный:</div>
<div class="inp" style="left:437.4px;top:540.5px;width:218.10px;height:13px">Абрамов Геннадий Сергеевич<div class="sep" style="left:194.30px"></div><div class="sep" style="left:205.50px"></div></div>
<svg class="a" style="left:635.80px;top:545.40px" width="5" height="4" viewBox="0 0 5 4"><path d="M0.900 0.800H4.100L2.500 2.800Z" fill="#3c3c3c"/></svg>
<svg class="a" style="left:646.40px;top:543.60px" width="7" height="7" viewBox="0 0 7 7"><path d="M2.600 0.800H5.900V4.100H2.600Z" fill="#fff" stroke="#7d7d7d" stroke-width="0.700"/><path d="M0.900 2.500H4.200V5.800H0.900Z" fill="#fff" stroke="#7d7d7d" stroke-width="0.700"/></svg>
<svg class="a" style="left:373.600px;top:461.600px" width="7" height="11" viewBox="0 0 7 11"><path d="M0.500 0.500V8.500L2.400 6.800L3.700 10L5 9.500L3.700 6.400H6.200Z" fill="#fff" stroke="#222" stroke-width="0.700" stroke-linejoin="round"/></svg>
<svg class="a" style="left:0;top:0;pointer-events:none" width="1024" height="560" viewBox="0 0 1024 560" font-family="Liberation Sans, sans-serif" font-weight="bold">
<defs><g id="lg"><circle r="22.7" stroke="none"/><g transform="rotate(40.05)"><g transform="rotate(-21)"><text x="-0.3" y="15.2" font-size="42.5" text-anchor="middle" fill="#fff" stroke="#fff" stroke-width="1.2" stroke-linejoin="round">S</text></g><path d="M-22.6 1.5 C-16 4 -8 2.5 -1 0.5 C2 -0.5 5 -1.5 7 -1.5 C3 1 -3 6 -6 11 L-2 13.5 L-7 15.5 L-4 19 C-8 20.5 -13 19 -17 15 C-20 11 -22 6 -22.6 1.5Z" stroke="none"/><path d="M-21.500 2.200 L-19 1.200 L-20.800 -0.800 L-18 0.800 L-16.500 -0.500 L-16.800 1.800 L-13 2.800 L-18 3.200Z" fill="#fff" stroke="none"/></g></g><g id="tx"><text x="42.300" y="10.100" font-size="23.800" textLength="119.300" lengthAdjust="spacingAndGlyphs" stroke-width="2.600" stroke-linejoin="round">SW.BAND</text><path d="M44 -2 L38.500 -8.500 M41 -5.500 L37 -4.500 M155.500 -7 L157.500 -12.500 M156.500 -9.500 L160.500 -11.500 M79.500 -6.500 L81.500 -11.500 M80.500 -9 L83.500 -10.500" fill="none" stroke-width="1.300" stroke-linecap="round"/></g></defs>
<g transform="translate(435.9 673.1) rotate(-40.05)" fill="#4f9e25" stroke="#4f9e25" opacity="0.86"><use href="#lg"/><use href="#tx"/></g>
<g transform="translate(587.9 545.3) rotate(-40.05)" fill="#6bb928" stroke="#6bb928" opacity="0.86"><use href="#lg"/><use href="#tx"/></g>
<g transform="translate(544.0 647.5) rotate(-40.05)" fill="#6bb928" stroke="#6bb928" opacity="0.86"><use href="#lg"/><use href="#tx"/></g>
<g transform="translate(740.0 417.4) rotate(-40.05)" fill="#4f9e25" stroke="#4f9e25" opacity="0.86"><use href="#lg"/><use href="#tx"/></g>
<g transform="translate(696.0 519.6) rotate(-40.05)" fill="#4f9e25" stroke="#4f9e25" opacity="0.86"><use href="#lg"/><use href="#tx"/></g>
<g transform="translate(652.1 621.8) rotate(-40.05)" fill="#4f9e25" stroke="#4f9e25" opacity="0.86"><use href="#lg"/><use href="#tx"/></g>
<g transform="translate(892.1 289.6) rotate(-40.05)" opacity="0.86"><use href="#lg" fill="#6bb928" stroke="#6bb928"/><use href="#tx" fill="#4c9a24" stroke="#4c9a24"/></g>
<g transform="translate(848.1 391.8) rotate(-40.05)" fill="#6bb928" stroke="#6bb928" opacity="0.86"><use href="#lg"/><use href="#tx"/></g>
<g transform="translate(804.1 493.9) rotate(-40.05)" fill="#6bb928" stroke="#6bb928" opacity="0.86"><use href="#lg"/><use href="#tx"/></g>
<g transform="translate(760.2 596.1) rotate(-40.05)" fill="#6bb928" stroke="#6bb928" opacity="0.86"><use href="#lg"/><use href="#tx"/></g>
<g transform="translate(716.2 698.3) rotate(-40.05)" fill="#6bb928" stroke="#6bb928" opacity="0.86"><use href="#lg"/><use href="#tx"/></g>
<g transform="translate(1044.1 161.7) rotate(-40.05)" fill="#4f9e25" stroke="#4f9e25" opacity="0.86"><use href="#lg"/><use href="#tx"/></g>
<g transform="translate(1000.2 263.9) rotate(-40.05)" fill="#4f9e25" stroke="#4f9e25" opacity="0.86"><use href="#lg"/><use href="#tx"/></g>
<g transform="translate(956.2 366.1) rotate(-40.05)" fill="#4f9e25" stroke="#4f9e25" opacity="0.86"><use href="#lg"/><use href="#tx"/></g>
<g transform="translate(912.2 468.3) rotate(-40.05)" opacity="0.86"><use href="#lg" fill="#4f9e25" stroke="#4f9e25"/><use href="#tx" fill="#62b028" stroke="#62b028"/></g>
<g transform="translate(868.3 570.5) rotate(-40.05)" fill="#4f9e25" stroke="#4f9e25" opacity="0.86"><use href="#lg"/><use href="#tx"/></g>
<g transform="translate(824.3 672.7) rotate(-40.05)" fill="#4f9e25" stroke="#4f9e25" opacity="0.86"><use href="#lg"/><use href="#tx"/></g>
<g transform="translate(1020.4 442.6) rotate(-40.05)" fill="#6bb928" stroke="#6bb928" opacity="0.86"><use href="#lg"/><use href="#tx"/></g>
<g transform="translate(976.4 544.8) rotate(-40.05)" fill="#6bb928" stroke="#6bb928" opacity="0.86"><use href="#lg"/><use href="#tx"/></g>
<g transform="translate(932.4 647.0) rotate(-40.05)" fill="#6bb928" stroke="#6bb928" opacity="0.86"><use href="#lg"/><use href="#tx"/></g>
<g transform="translate(1040.5 621.3) rotate(-40.05)" fill="#4f9e25" stroke="#4f9e25" opacity="0.86"><use href="#lg"/><use href="#tx"/></g>
</svg>
</div>
</body>
</html>
